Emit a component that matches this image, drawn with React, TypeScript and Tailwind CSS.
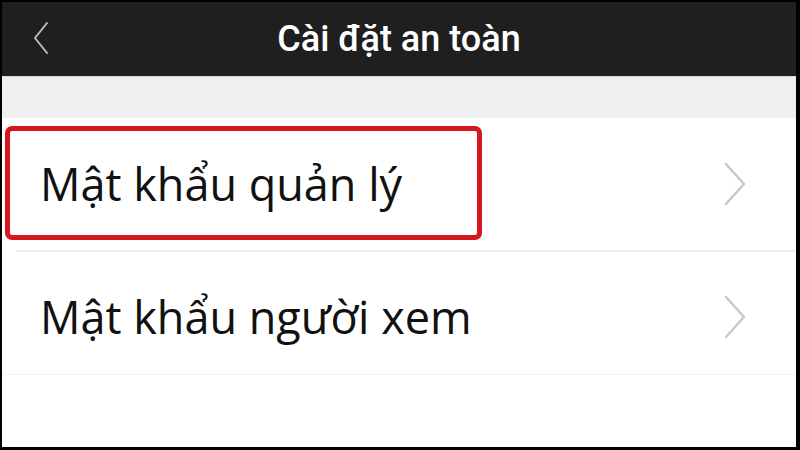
import React from "react";

function Chevron({ className }: { className?: string }) {
  return (
    <svg width="26" height="44" viewBox="0 0 26 44" className={className}>
      <polyline points="4,2 22,22 4,42" fill="none" stroke="#c9c9c9" strokeWidth="2.5" strokeLinecap="round" strokeLinejoin="round" />
    </svg>
  );
}

export default function App() {
  return (
    <div className="w-[800px] h-[450px] bg-black pt-[2px] pl-[2px] pr-[4px] pb-[3px] overflow-hidden">
      <div className="w-full h-full flex flex-col bg-white">
        <div className="h-[74px] bg-[#1f1f1f] flex items-center relative shrink-0">
          <svg width="20" height="34" viewBox="0 0 20 34" className="absolute left-[30px] top-[19px]">
            <polyline points="15,2 3,17 15,32" fill="none" stroke="#bdbdbd" strokeWidth="2" strokeLinecap="round" strokeLinejoin="round" />
          </svg>
          <div className="w-full text-center text-white text-[36px] font-medium" style={{ fontFamily: "Roboto, sans-serif" }}>
            Cài đặt an toàn
          </div>
        </div>
        <div className="h-[42px] bg-[#efefef] shrink-0 border-t border-[#d8d8d8]" />
        <div className="h-[132px] flex items-center pl-[3px] pr-[48px] relative shrink-0">
          <div className="absolute left-[3px] top-[8px] w-[477px] h-[114px] border-[5px] border-[#d5181f] rounded-[7px]" />
          <div className="flex-1 pl-[35px] text-[45px] text-[#111]" style={{ fontFamily: "'Open Sans', sans-serif" }}>
            Mật khẩu quản lý
          </div>
          <Chevron />
        </div>
        <div className="h-[2px] bg-[#ececec] ml-[14px] shrink-0" />
        <div className="h-[123px] flex items-center pt-[8px] pr-[48px] shrink-0 border-b border-[#f3f3f3]">
          <div className="flex-1 pl-[38px] text-[45px] text-[#111]" style={{ fontFamily: "'Open Sans', sans-serif" }}>
            Mật khẩu người xem
          </div>
          <Chevron />
        </div>
        <div className="flex-1 bg-white" />
      </div>
    </div>
  );
}
